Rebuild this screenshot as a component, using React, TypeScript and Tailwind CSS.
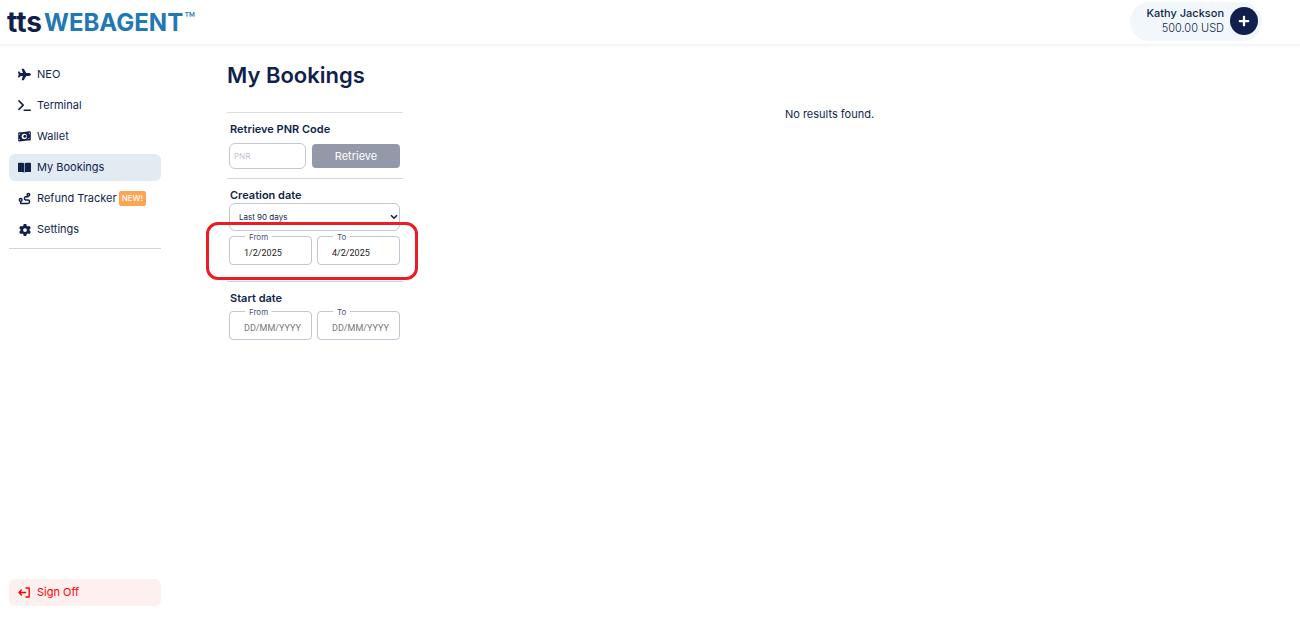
import { useState } from "react";
import type { ReactNode } from "react";
import { FaPlane, FaPlus } from "react-icons/fa";
import { FaGear } from "react-icons/fa6";

type NavItem = {
  label: string;
  icon: ReactNode;
  isNew?: boolean;
};

const TerminalIcon = () => (
  <svg viewBox="0 0 14 14" className="size-[13px]" fill="none" stroke="currentColor" strokeWidth="1.6" strokeLinecap="round" strokeLinejoin="round" aria-hidden="true">
    <path d="M1 2 5.6 6.6 1 11.2M6.6 12h6.6" />
  </svg>
);

const CashIcon = () => (
  <svg viewBox="0 0 13 13" className="size-[13px]" aria-hidden="true">
    <path d="M.2 3.2C.2 2.6.6 2.2 1.2 2.2h2.4l8-.9c.7-.1 1.2.3 1.2.9v7.4c0 .6-.4 1-1 1H9.6l-8 .9c-.8.1-1.4-.3-1.4-1z" fill="currentColor" />
    <circle cx="6.3" cy="6.4" r="2.7" fill="#fff" />
    <circle cx="6.9" cy="6.2" r="1.5" fill="currentColor" />
    <path d="M1.4 3.6v1.2M1.4 9.2v1M11.4 2.8v1.4M10.2 9.2l1.2-1.4" stroke="#fff" strokeWidth=".8" fill="none" />
  </svg>
);

const BookIcon = () => (
  <svg viewBox="0 0 13 13" className="size-[13px]" fill="currentColor" aria-hidden="true">
    <path d="M.7 1.8c2-.2 4-.1 5.5.4v9.3c-1.6-.5-3.5-.5-5.5-.4a.7.7 0 0 1-.7-.7V2.5c0-.4.3-.7.7-.7zM12.3 1.8c-2-.2-4-.1-5.5.4v9.3c1.6-.5 3.5-.5 5.5-.4.4 0 .7-.3.7-.7V2.5c0-.4-.3-.7-.7-.7z" />
  </svg>
);

const RouteIcon = () => (
  <svg viewBox="0 0 14 14" className="size-[13px]" fill="none" stroke="currentColor" strokeWidth="1.6" strokeLinecap="round" strokeLinejoin="round" aria-hidden="true">
    <circle cx="2.9" cy="8.6" r="1.5" />
    <path d="M2.9 10.3v2h7.8a1.8 1.8 0 0 0 0-3.6H8.3a1.8 1.8 0 0 1 0-3.5h2.5" />
    <circle cx="11.2" cy="2.9" r="1.4" />
  </svg>
);

const ExitIcon = () => (
  <svg viewBox="0 0 13 13" className="size-[13px]" fill="none" stroke="currentColor" strokeWidth="1.4" strokeLinecap="round" strokeLinejoin="round" aria-hidden="true">
    <path d="M8 2h3.2v9H8M7.6 6.5H1M3.4 4 1 6.5 3.4 9" />
  </svg>
);

const navItems: NavItem[] = [
  { label: "NEO", icon: <FaPlane className="size-[13px]" /> },
  { label: "Terminal", icon: <TerminalIcon /> },
  { label: "Wallet", icon: <CashIcon /> },
  { label: "My Bookings", icon: <BookIcon /> },
  { label: "Refund Tracker", icon: <RouteIcon />, isNew: true },
  { label: "Settings", icon: <FaGear className="size-3" /> },
];

const Header = () => (
  <header className="flex h-[45px] items-center justify-between border-b border-gray-100 pr-[38px] pb-0.5 pl-[7px] shadow-xs">
    <a href="#home" className="flex items-center pt-0.5 leading-6">
      <span className="text-[28px] font-bold text-[#111f4d]">tts</span>
      <span className="ml-0.5 pt-0.5 text-2xl leading-6 font-bold text-[#2079b4]">WEBAGENT</span>
      <span className="mb-1 ml-px text-lg leading-4 text-[#2079b4]">™</span>
    </a>
    <div className="flex h-[39px] items-center gap-1.5 rounded-full bg-[#f1f7fa] pr-1 pl-4">
      <div className="text-right text-[11px] leading-[15px]">
        <p className="font-medium">Kathy Jackson</p>
        <p className="font-light">500.00 USD</p>
      </div>
      <button type="button" aria-label="Add funds" className="flex size-7 items-center justify-center rounded-full bg-[#111f4d] text-white">
        <FaPlus className="size-3" />
      </button>
    </div>
  </header>
);

const Sidebar = () => {
  const [active, setActive] = useState("My Bookings");

  return (
    <aside className="flex w-[161px] shrink-0 flex-col pb-[11px] pl-[9px]">
      <nav className="flex flex-col gap-1 border-b border-[#d0d3de] pt-4 pb-[5px]">
        {navItems.map((item) => (
          <a
            key={item.label}
            href="#bookings"
            onClick={() => setActive(item.label)}
            className={`flex h-[27px] items-center gap-1.5 rounded-md pl-[9px] text-[11px] leading-[17px] ${item.label === active ? "bg-[#e2ebf1]" : ""}`}
          >
            <span className="flex w-[13px] justify-center">{item.icon}</span>
            {item.label}
            {item.isNew && (
              <span className="-ml-1 rounded-xs bg-[#ffa552] px-[3px] text-[8px] leading-[15px] font-medium text-white">NEW!</span>
            )}
          </a>
        ))}
      </nav>
      <button type="button" className="mt-auto flex h-[27px] items-center gap-1.5 rounded-md bg-[#fff0f0] pl-[9px] text-[11px] leading-[17px] text-[#ff0000]">
        <ExitIcon />
        Sign Off
      </button>
    </aside>
  );
};

type DateFieldProps = {
  id: string;
  label: string;
  initial?: string;
};

const DateField = ({ id, label, initial = "" }: DateFieldProps) => (
  <div className="relative min-w-0 flex-1">
    <label htmlFor={id} className="absolute -top-1 left-4 bg-white px-1 text-[8px] leading-[10px] text-[#4a5475]">
      {label}
    </label>
    <input
      id={id}
      type="text"
      defaultValue={initial}
      placeholder="DD/MM/YYYY"
      className="h-[29px] w-full rounded-sm border border-[#c3c6d4] pt-1 pl-3.5 font-['Roboto',sans-serif] text-[9px] text-[#222] placeholder:text-[#777]"
    />
  </div>
);

const SectionTitle = ({ children }: { children: ReactNode }) => (
  <h2 className="pl-[3px] text-[11px] leading-[15px] font-semibold">{children}</h2>
);

const Filters = () => (
  <div className="mt-[21px] w-44">
    <section className="border-t border-[#dcdee3] pt-[9px] pb-[9px]">
      <SectionTitle>Retrieve PNR Code</SectionTitle>
      <form className="mt-1.5 flex items-center gap-1.5 pr-[3px] pl-0.5" onSubmit={(e) => e.preventDefault()}>
        <input
          type="text"
          aria-label="PNR"
          placeholder="PNR"
          className="h-[26px] w-[77px] rounded-md border border-[#c3c6d4] px-1 text-[8px] placeholder:text-[#bfc2cd]"
        />
        <button type="submit" className="h-6 flex-1 rounded-sm bg-[#9499aa] text-[11px] text-white">
          Retrieve
        </button>
      </form>
    </section>

    <section className="border-t border-[#d0d3da] pt-[9px] pb-4">
      <SectionTitle>Creation date</SectionTitle>
      <div className="pr-[3px] pl-0.5">
        <div className="relative">
          <select aria-label="Creation date" className="block h-7 w-full appearance-none rounded-md border border-[#c3c6d4] pl-[9px] text-[8px]">
            <option>Last 90 days</option>
            <option>Last 30 days</option>
            <option>Last 7 days</option>
          </select>
          <svg viewBox="0 0 8 6" className="pointer-events-none absolute top-[11px] right-0.5 h-1.5 w-2" fill="none" stroke="currentColor" strokeWidth="1.6" aria-hidden="true">
            <path d="M1 1.2 4 4.2 7 1.2" />
          </svg>
        </div>
        <div className="relative mt-[5px] flex gap-[5px]">
          <DateField id="creation-from" label="From" initial="1/2/2025" />
          <DateField id="creation-to" label="To" initial="4/2/2025" />
          {/* highlight around the creation range */}
          <div className="pointer-events-none absolute -top-3.5 -right-[18px] -bottom-[15px] -left-[23px] rounded-xl border-3 border-[#ed1c24]" />
        </div>
      </div>
    </section>

    <section className="border-t border-[#d0d3da] pt-[9px]">
      <SectionTitle>Start date</SectionTitle>
      <div className="mt-[5px] flex gap-[5px] pr-[3px] pl-0.5">
        <DateField id="start-from" label="From" />
        <DateField id="start-to" label="To" />
      </div>
    </section>
  </div>
);

const App = () => {
  return (
    <div className="flex min-h-screen flex-col bg-white font-['Inter',sans-serif] text-[#111f4d]">
      <Header />
      <div className="flex flex-1">
        <Sidebar />
        <main className="flex flex-1 pl-[66px]">
          <div className="w-44 shrink-0 pt-3.5">
            <h1 className="text-[22px] leading-8 font-semibold whitespace-nowrap">My Bookings</h1>
            <Filters />
          </div>
          <p className="flex-1 pt-[61px] pr-11 text-center text-[11px] leading-4">No results found.</p>
        </main>
      </div>
    </div>
  );
};

export default App;
